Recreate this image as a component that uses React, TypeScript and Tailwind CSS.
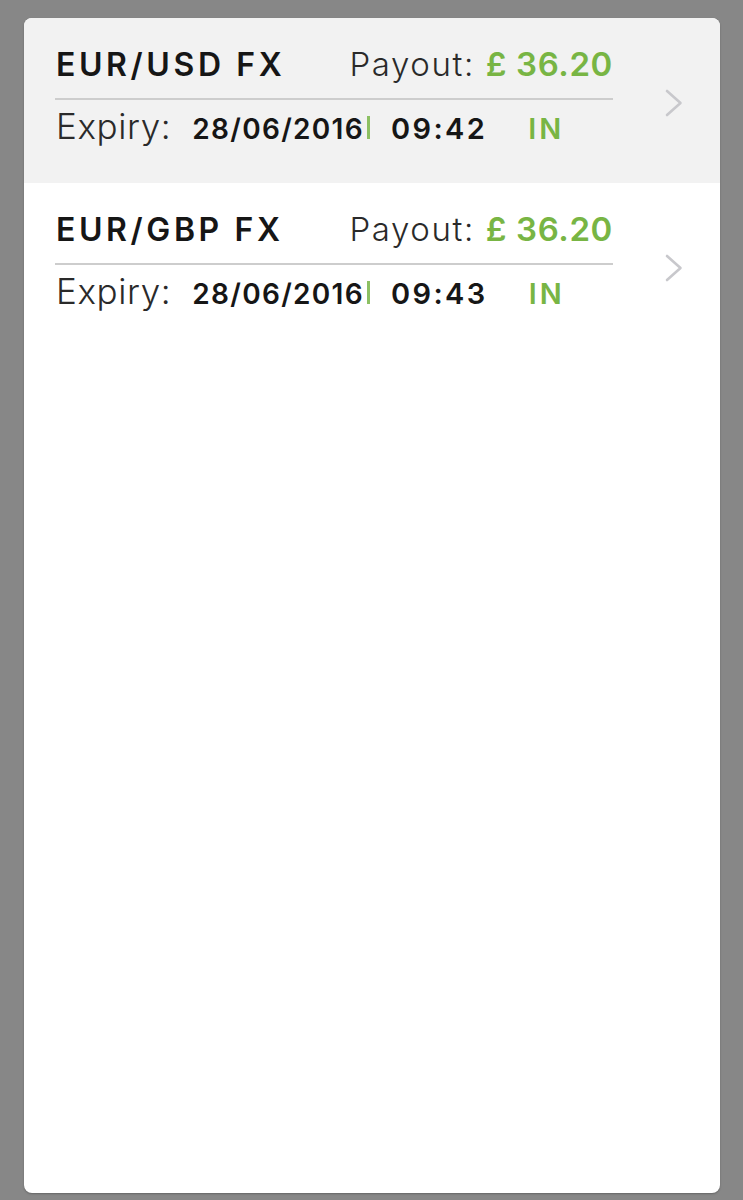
type Trade = {
  name: string
  payout: string
  date: string
  time: string
  status: string
  active?: boolean
}

const trades: Trade[] = [
  { name: 'EUR/USD FX', payout: '£ 36.20', date: '28/06/2016', time: '09:42', status: 'IN', active: true },
  { name: 'EUR/GBP FX', payout: '£ 36.20', date: '28/06/2016', time: '09:43', status: 'IN' },
]

function Chevron() {
  return (
    <svg width="18" height="28" viewBox="0 0 18 28" fill="none">
      <polyline
        points="2,2 15.5,14 2,26"
        stroke="#c8c8cc"
        strokeWidth="2.6"
        strokeLinecap="round"
        strokeLinejoin="round"
      />
    </svg>
  )
}

function TradeRow({ trade }: { trade: Trade }) {
  return (
    <div className={`flex items-start h-[165px] ${trade.active ? 'bg-[#f2f2f2]' : 'bg-white'}`}>
      <div className="ml-[31px] w-[558px]">
        <div className="flex items-baseline justify-between pt-[30px] pl-[1px]">
          <span className="text-[32px] font-semibold text-[#161616] leading-none tracking-[3.6px]">{trade.name}</span>
          <span className="text-[33px] leading-none">
            <span className="font-light text-[#2a2a2a] tracking-[1.6px]">Payout: </span>
            <span className="font-semibold text-[#78b544] tracking-[0.6px]">{trade.payout}</span>
          </span>
        </div>
        <div className="mt-[17px] h-[2px] bg-[#cdcdcd]" />
        <div className="flex items-baseline mt-[9px] pl-[1px]">
          <span className="text-[35px] font-light text-[#2a2a2a] leading-none tracking-[0.6px]">Expiry:</span>
          <span className="ml-[21px] text-[28px] font-semibold text-[#161616] leading-none tracking-[1.3px]">{trade.date}</span>
          <span className="ml-[3px] w-[3px] h-[23px] bg-[#8cc063]" />
          <span className="ml-[21px] text-[29px] font-semibold text-[#161616] leading-none tracking-[2.4px]">{trade.time}</span>
          <span className="ml-[41px] text-[29px] font-semibold text-[#78b544] leading-none tracking-[3px]">{trade.status}</span>
        </div>
      </div>
      <div className="ml-[52px] mt-[71px]">
        <Chevron />
      </div>
    </div>
  )
}

export default function App() {
  return (
    <div className="w-[743px] h-[1200px] bg-[#878787] pt-[18px] pl-[24px]" style={{ fontFamily: 'Inter, "Noto Sans", sans-serif' }}>
      <div className="w-[696px] h-[1175px] bg-white rounded-[8px] overflow-hidden shadow-[0_1px_2px_rgba(0,0,0,0.25)]">
        {trades.map((t) => (
          <TradeRow key={t.name} trade={t} />
        ))}
      </div>
    </div>
  )
}
